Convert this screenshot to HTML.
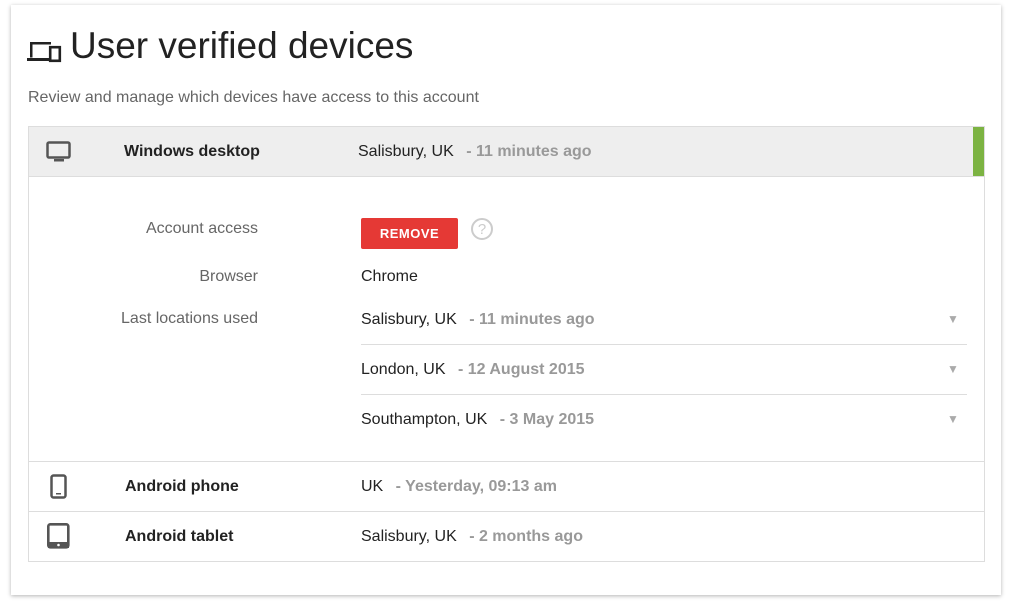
<!DOCTYPE html>
<html><head><style>
body{margin:0;width:1012px;height:603px;background:#fff;font-family:"Liberation Sans",Arial,sans-serif;position:relative;overflow:hidden}
.card{position:absolute;left:11px;top:5px;width:990px;height:590px;background:#fff;box-shadow:0 1px 4px rgba(0,0,0,.3)}
.a{position:absolute;white-space:nowrap}
.b{font-weight:bold;color:#222;font-size:16px}
.loc{font-size:16px;color:#222}
.g{color:#999;font-weight:bold;font-size:16px}
.lab{font-size:16px;color:#666;text-align:right;width:230px;left:28px}
.hl{position:absolute;height:1px;background:#ddd}
.tri{position:absolute;left:947px;color:#aaa;font-size:12px}
</style></head><body>
<div class="card"></div>
<svg class="a" style="left:27px;top:39px" width="36" height="24" viewBox="0 0 36 24"><path d="M3 3h21v2.5H5.5v13H3z M0 19h22v3H0z" fill="#222"/><rect x="23.2" y="8.2" width="9.6" height="13.6" fill="none" stroke="#222" stroke-width="2.6"/></svg>
<div class="a" style="left:70px;top:25px;font-size:37px;color:#222">User verified devices</div>
<div class="a" style="left:28px;top:89px;font-size:16px;color:#666">Review and manage which devices have access to this account</div>
<div class="a" style="left:28px;top:126px;width:955px;height:434px;border:1px solid #ddd"></div>
<div class="a" style="left:29px;top:127px;width:955px;height:49px;background:#eee;border-bottom:1px solid #ddd"></div>
<div class="a" style="left:973px;top:127px;width:11px;height:49px;background:#7cb342"></div>
<svg class="a" style="left:46px;top:141px" width="26" height="22" viewBox="0 0 26 22"><rect x="1.5" y="1.5" width="22" height="15" rx="1.5" fill="none" stroke="#555" stroke-width="2.5"/><rect x="8" y="18" width="10" height="2.5" fill="#555"/></svg>
<div class="a b" style="left:124px;top:143px">Windows desktop</div>
<div class="a loc" style="left:358px;top:143px">Salisbury, UK <span class="g" style="margin-left:8px">- 11 minutes ago</span></div>
<div class="a lab" style="top:220px">Account access</div>
<div class="a" style="left:361px;top:218px;width:97px;height:31px;background:#e53935;border-radius:2px;color:#fff;font-size:13px;font-weight:bold;text-align:center;line-height:31px;letter-spacing:.5px">REMOVE</div>
<div class="a" style="left:471px;top:218px;width:18px;height:18px;border:2px solid #ccc;border-radius:50%;color:#ccc;font-size:15px;text-align:center;line-height:19px">?</div>
<div class="a lab" style="top:268px">Browser</div>
<div class="a loc" style="left:361px;top:268px">Chrome</div>
<div class="a lab" style="top:310px">Last locations used</div>
<div class="a loc" style="left:361px;top:311px">Salisbury, UK <span class="g" style="margin-left:8px">- 11 minutes ago</span></div>
<div class="tri" style="top:312px">▼</div>
<div class="hl" style="left:361px;top:344px;width:606px"></div>
<div class="a loc" style="left:361px;top:361px">London, UK <span class="g" style="margin-left:8px">- 12 August 2015</span></div>
<div class="tri" style="top:362px">▼</div>
<div class="hl" style="left:361px;top:394px;width:606px"></div>
<div class="a loc" style="left:361px;top:411px">Southampton, UK <span class="g" style="margin-left:8px">- 3 May 2015</span></div>
<div class="tri" style="top:412px">▼</div>
<div class="hl" style="left:29px;top:461px;width:955px"></div>
<svg class="a" style="left:50px;top:474px" width="17" height="25" viewBox="0 0 17 25"><rect x="1.5" y="1.5" width="14" height="22" rx="2" fill="none" stroke="#555" stroke-width="2.5"/><rect x="6" y="19" width="5" height="1.5" fill="#555"/></svg>
<div class="a b" style="left:125px;top:478px">Android phone</div>
<div class="a loc" style="left:361px;top:478px">UK <span class="g" style="margin-left:8px">- Yesterday, 09:13 am</span></div>
<div class="hl" style="left:29px;top:511px;width:955px"></div>
<svg class="a" style="left:47px;top:523px" width="23" height="26" viewBox="0 0 23 26"><rect x="1.3" y="1.3" width="20" height="23" rx="2" fill="none" stroke="#555" stroke-width="2.6"/><rect x="1" y="19" width="21" height="6" fill="#555"/><circle cx="11.5" cy="22" r="1.3" fill="#fff"/></svg>
<div class="a b" style="left:125px;top:528px">Android tablet</div>
<div class="a loc" style="left:361px;top:528px">Salisbury, UK <span class="g" style="margin-left:8px">- 2 months ago</span></div>
</body></html>
